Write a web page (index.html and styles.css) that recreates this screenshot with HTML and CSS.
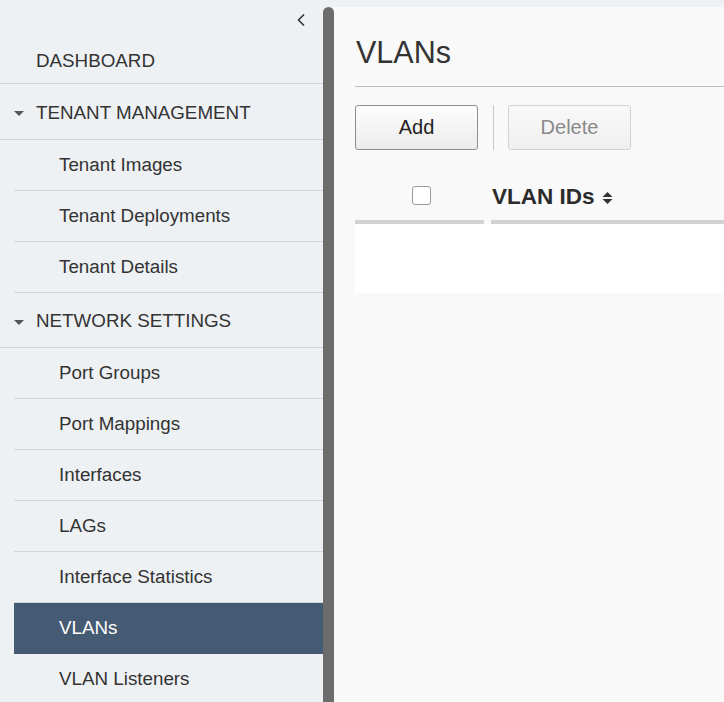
FILE: index.html
```html
<!DOCTYPE html>
<html>
<head>
<meta charset="utf-8">
<link rel="stylesheet" href="styles.css">
</head>
<body>
<div class="app">
  <nav class="sidebar">
    <div class="collapse-row">
      <svg class="chev" width="12" height="14" viewBox="0 0 12 14"><polyline points="9,1.5 3.5,7 9,12.5" fill="none" stroke="#333" stroke-width="1.6"/></svg>
    </div>
    <div class="head dash">DASHBOARD</div>
    <div class="head"><span class="tri"></span>TENANT MANAGEMENT</div>
    <div class="item">Tenant Images</div>
    <div class="item">Tenant Deployments</div>
    <div class="item">Tenant Details</div>
    <div class="head short"><span class="tri"></span>NETWORK SETTINGS</div>
    <div class="item">Port Groups</div>
    <div class="item">Port Mappings</div>
    <div class="item">Interfaces</div>
    <div class="item">LAGs</div>
    <div class="item">Interface Statistics</div>
    <div class="item active">VLANs</div>
    <div class="item">VLAN Listeners</div>
  </nav>
  <div class="scrollbar"></div>
  <main class="main">
    <h1 class="title">VLANs</h1>
    <div class="toolbar">
      <button class="btn">Add</button>
      <span class="sep"></span>
      <button class="btn disabled">Delete</button>
    </div>
    <div class="table">
      <div class="thead">
        <div class="th th-check"><span class="checkbox"></span></div>
        <div class="th th-id">VLAN IDs
          <svg class="sort" width="11" height="14" viewBox="0 0 11 14"><polygon points="5.5,1 10.5,6 0.5,6" fill="#333"/><polygon points="0.5,8 10.5,8 5.5,13" fill="#333"/></svg>
        </div>
      </div>
      <div class="tbody"></div>
    </div>
  </main>
</div>
</body>
</html>
```

FILE: styles.css
```css
* { box-sizing: border-box; }
html, body { margin: 0; padding: 0; }
body {
  background: #eef1f4;
  font-family: "Liberation Sans", Arial, sans-serif;
  color: #333;
  width: 724px;
  height: 702px;
  overflow: hidden;
}
.app {
  display: flex;
  height: 702px;
}
.sidebar {
  width: 323px;
  flex: none;
  font-size: 18.8px;
}
.collapse-row {
  height: 28px;
  display: flex;
  justify-content: flex-end;
  align-items: flex-start;
  padding: 13px 16px 0 0;
}
.chev { display: block; }
.head {
  height: 56px;
  display: flex;
  align-items: center;
  padding-left: 36px;
  border-bottom: 1px solid #cfd6de;
  position: relative;
  padding-top: 2px;
}
.head.short { height: 55px; }
.head.dash { padding-top: 10px; height: 56px; }
.tri {
  position: absolute;
  left: 14px;
  top: 27px;
  width: 0;
  height: 0;
  border-left: 5px solid transparent;
  border-right: 5px solid transparent;
  border-top: 5px solid #555;
}
.item {
  height: 51px;
  margin-left: 14px;
  padding-left: 45px;
  display: flex;
  align-items: center;
  border-bottom: 1px solid #cfd6de;
}
.item.active {
  background: #455a73;
  color: #fff;
  border-bottom-color: #455a73;
}
.scrollbar {
  width: 11px;
  flex: none;
  margin-top: 7px;
  background: #6c6c6c;
  border-radius: 6px 6px 0 0;
}
.main {
  flex: 1;
  margin-top: 7px;
  background: #f9f9f9;
  padding-left: 21px;
  overflow: hidden;
}
.title {
  margin: 0;
  font-weight: normal;
  font-size: 30.5px;
  line-height: 36px;
  padding-top: 27px;
  padding-bottom: 16px;
  border-bottom: 1px solid #bdbdbd;
  width: 420px;
  padding-left: 1px;
}
.toolbar {
  display: flex;
  align-items: stretch;
  margin-top: 18px;
  height: 45px;
}
.btn {
  width: 123px;
  height: 45px;
  font-family: "Liberation Sans", Arial, sans-serif;
  font-size: 20px;
  color: #222;
  border: 1px solid #8e8e8e;
  border-radius: 3px;
  background: linear-gradient(#fdfdfd, #ececec);
  padding: 0;
}
.btn.disabled {
  color: #8a8a8a;
  border-color: #d2d2d2;
  background: linear-gradient(#f8f8f8, #f0f0f0);
}
.sep {
  width: 1px;
  background: #c8c8c8;
  margin: 0 14px 0 15px;
}
.table {
  margin-top: 20px;
  width: 420px;
}
.thead {
  display: flex;
  gap: 7px;
}
.th {
  height: 54px;
  border-bottom: 4px solid #d2d2d2;
  display: flex;
  align-items: center;
}
.th-check {
  width: 129px;
  justify-content: center;
  padding-left: 4px;
}
.checkbox {
  width: 19px;
  height: 19px;
  border: 1.5px solid #9a9a9a;
  border-radius: 3px;
  background: #fff;
}
.th-id {
  flex: 1;
  font-weight: bold;
  font-size: 22.5px;
  padding-left: 1px;
  padding-top: 4px;
  color: #2b2b2b;
}
.sort { margin-left: 7px; margin-top: 2px; }
.tbody {
  height: 69px;
  background: #fff;
}
```
